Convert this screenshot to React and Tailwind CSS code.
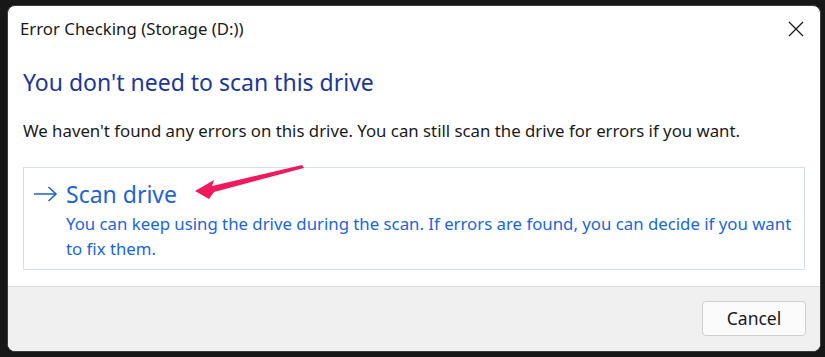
import React from "react";

export default function App() {
  const font = { fontFamily: '"Noto Sans", "Open Sans", sans-serif' };
  return (
    <div className="relative w-[825px] h-[357px] bg-[#171717] pt-[5px] pl-[7px]" style={font}>
      <div className="w-[814px] h-[347px] rounded-[8px] border border-[#3c3c3c] flex flex-col overflow-hidden bg-white">
        <div className="flex-1 flex flex-col px-[15px]">
          <div className="flex items-start justify-between pt-[12px]">
            <div className="text-[16.8px] leading-[22px] text-[#1a1a1a] -ml-[3px]">
              Error Checking (Storage (D:))
            </div>
            <svg width="16" height="16" viewBox="0 0 16 16" className="mt-[3px] mr-[1px]">
              <path d="M1 1 L15 15 M15 1 L1 15" stroke="#1a1a1a" strokeWidth="1.3" fill="none" />
            </svg>
          </div>
          <div className="mt-[26px] text-[23px] leading-[32px] text-[#1a3799]">
            You don't need to scan this drive
          </div>
          <div className="mt-[22px] text-[16.8px] leading-[22px] text-[#1a1a1a]">
            We haven't found any errors on this drive. You can still scan the drive for errors if you want.
          </div>
          <div className="mt-[25px] h-[103px] border border-[#d6e0ea] flex pl-[9px] pt-[11px] pr-[6px]">
            <div className="w-[33px] shrink-0 h-[30px] flex items-center">
              <svg width="25" height="16" viewBox="0 0 25 16">
                <path d="M1 8 H23 M15.5 1 L23 8 L15.5 15" stroke="#1e63d6" strokeWidth="1.6" fill="none" />
              </svg>
            </div>
            <div className="flex flex-col">
              <div className="text-[23px] leading-[30px] text-[#1e63d6]">Scan drive</div>
              <div className="mt-[2px] text-[16.8px] leading-[25px] text-[#1a66e0]">
                You can keep using the drive during the scan. If errors are found, you can decide if you want to fix them.
              </div>
            </div>
          </div>
        </div>
        <div className="h-[65px] bg-[#f0f0f0] border-t border-[#dedede] flex justify-end items-start pt-[14px] pr-[14px]">
          <button className="w-[104px] h-[35px] rounded-[4px] border border-[#cfcfcf] bg-[#fbfbfb] text-[17.5px] text-[#1a1a1a]">
            Cancel
          </button>
        </div>
      </div>
      <svg className="absolute left-0 top-0 pointer-events-none" width="825" height="357">
        <polygon
          points="195,191 214,180 212,186 302,165 304,168 214,192 209,199"
          fill="#f0195c"
        />
      </svg>
    </div>
  );
}
